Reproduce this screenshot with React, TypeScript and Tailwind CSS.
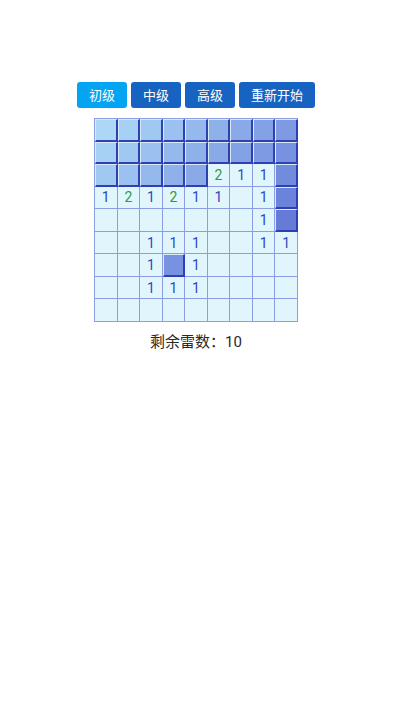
import React from 'react';

type Cell = { covered: boolean; n: number };

// board layout read off the screenshot: c = covered, 0 = empty, 1..8 = count
const LAYOUT = [
  'ccccccccc',
  'ccccccccc',
  'ccccc211c',
  '12121101c',
  '00000001c',
  '001110011',
  '001c10000',
  '001110000',
  '000000000',
];

const BOARD: Cell[][] = LAYOUT.map((row) =>
  row.split('').map((ch) => (ch === 'c' ? { covered: true, n: 0 } : { covered: false, n: Number(ch) })),
);

const FROM = [172, 216, 246];
const TO = [78, 92, 206];

function coverColor(r: number, c: number) {
  const t = (r + c) / 16;
  const v = FROM.map((f, i) => Math.round(f + (TO[i] - f) * t));
  return `rgb(${v[0]}, ${v[1]}, ${v[2]})`;
}

const NUM_COLORS: Record<number, string> = {
  1: 'text-[#2c48c0]',
  2: 'text-[#2e9b3c]',
  3: 'text-[#d0342c]',
};

function Square({ cell, r, c }: { cell: Cell; r: number; c: number }) {
  if (cell.covered) {
    return (
      <div
        className="border-t border-l border-t-[#d6ecfc] border-l-[#d6ecfc] border-r-2 border-b-2 border-r-[#3040b2] border-b-[#3040b2]"
        style={{ backgroundColor: coverColor(r, c) }}
      />
    );
  }
  return (
    <div className="flex items-center justify-center bg-[#e1f5fd] border-r border-b border-[#8c9fe4] text-[14px] leading-none">
      {cell.n > 0 && <span className={NUM_COLORS[cell.n]}>{cell.n}</span>}
    </div>
  );
}

export default function App() {
  const levels = ['初级', '中级', '高级', '重新开始'];

  return (
    <div
      className="w-[392px] min-h-[708px] bg-white flex flex-col items-center pt-[82px]"
      style={{ fontFamily: 'Roboto, "Noto Sans CJK SC", sans-serif' }}
    >
      <div className="flex gap-1">
        {levels.map((label, i) => (
          <button
            key={label}
            className={`h-[26px] px-[12px] rounded-[3px] text-[13px] text-white leading-none ${
              i === 0 ? 'bg-[#03a4f1]' : 'bg-[#1763c2]'
            }`}
          >
            {label}
          </button>
        ))}
      </div>

      <div className="mt-[10px] w-[204px] h-[204px] grid grid-cols-9 grid-rows-9 border-t border-l border-[#8c9fe4]">
        {BOARD.map((row, r) => row.map((cell, c) => <Square key={`${r}-${c}`} cell={cell} r={r} c={c} />))}
      </div>

      <div className="mt-[10px] text-[15px] text-[#2a2a2a] leading-[20px]">剩余雷数：10</div>
    </div>
  );
}
